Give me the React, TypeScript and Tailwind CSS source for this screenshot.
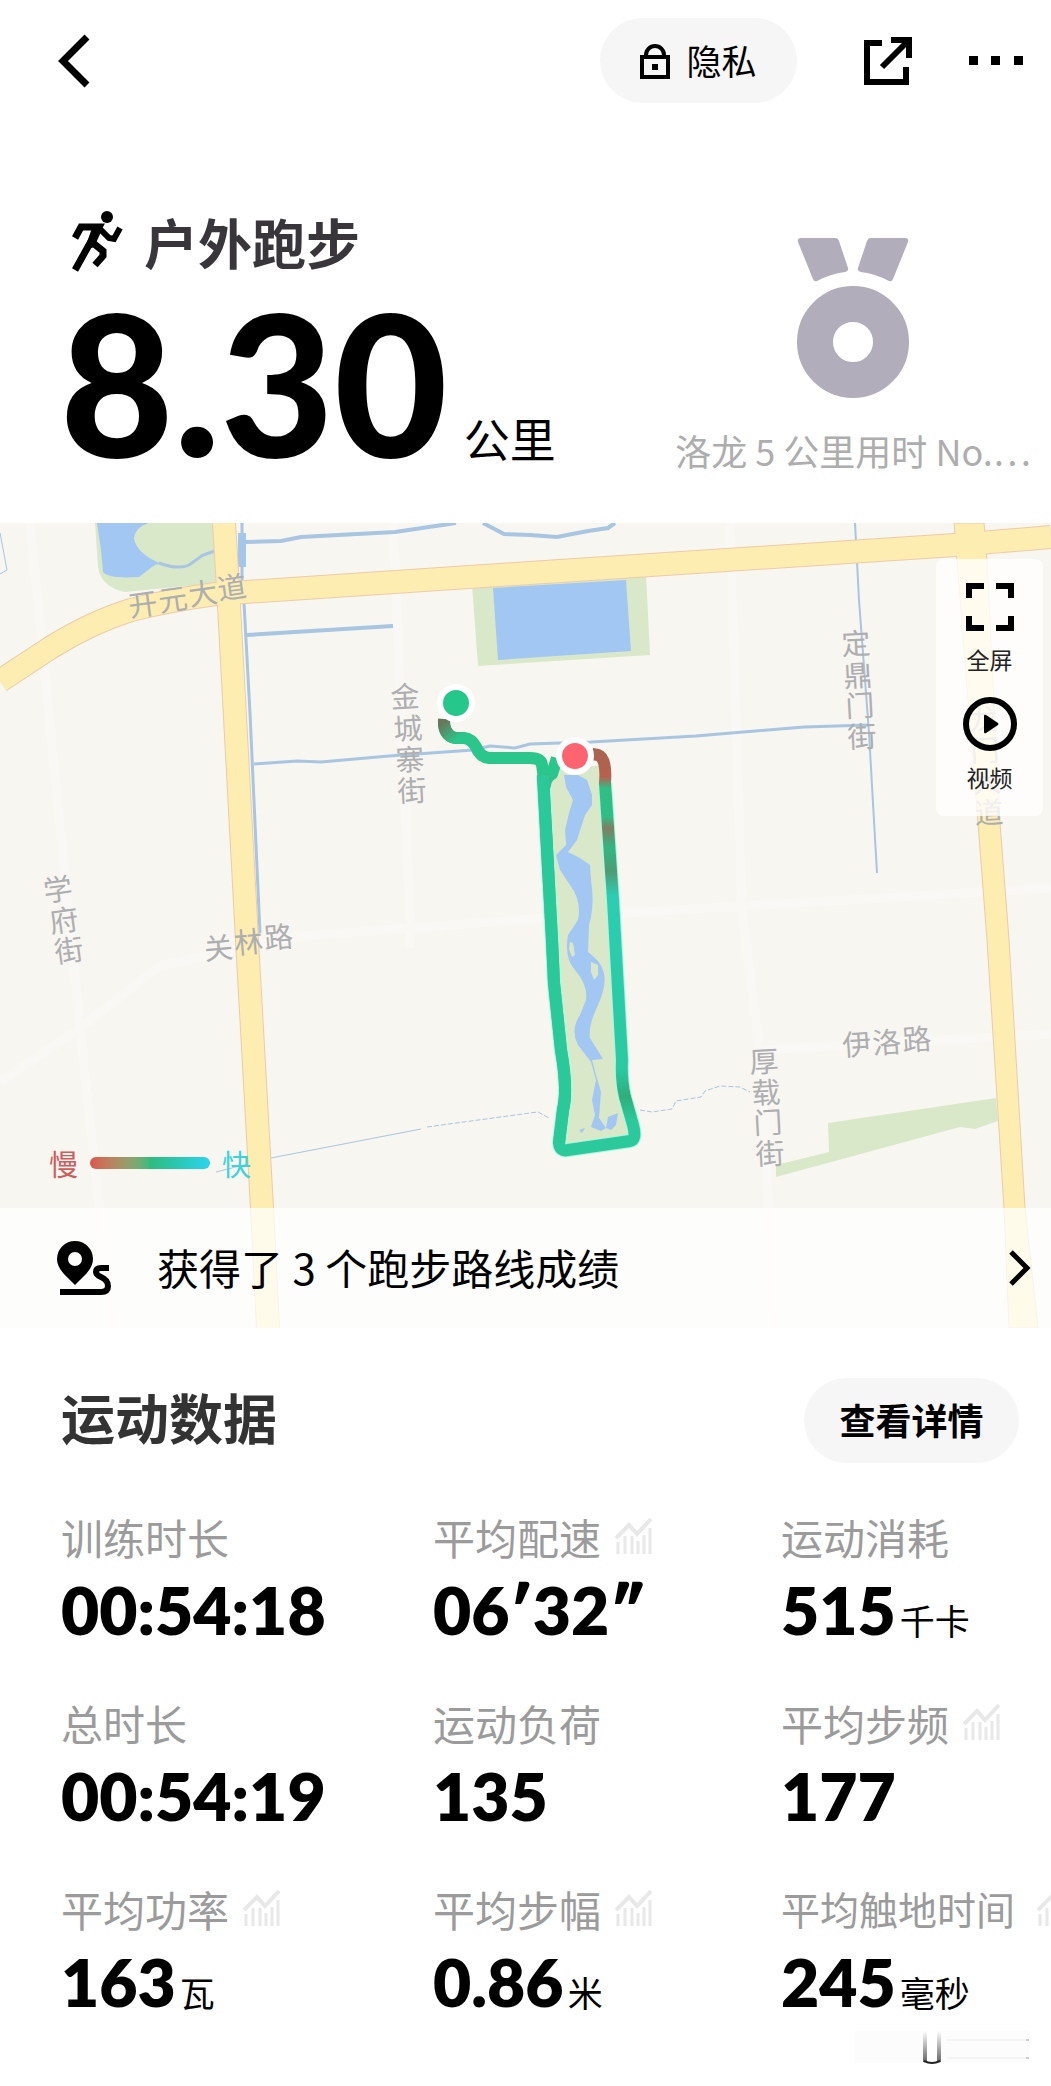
interface Metric {
  label: string;
  value: string;
  unit?: string;
  chart?: boolean;
  compact?: boolean;
}

const metrics: Metric[] = [
  { label: '训练时长', value: '00:54:18' },
  { label: '平均配速', value: '06′32″', chart: true },
  { label: '运动消耗', value: '515', unit: '千卡' },
  { label: '总时长', value: '00:54:19' },
  { label: '运动负荷', value: '135' },
  { label: '平均步频', value: '177', chart: true },
  { label: '平均功率', value: '163', unit: '瓦', chart: true },
  { label: '平均步幅', value: '0.86', unit: '米', chart: true },
  { label: '平均触地时间', value: '245', unit: '毫秒', chart: true, compact: true },
];

// x / y hold one position per character
const streets = [
  { name: '开元大道', x: '130 160 190 219', y: '617 612 606 600', rotate: -8 },
  { name: '金城寨街', x: '391 394 396 398', y: '708 740 771 802', rotate: -3 },
  { name: '学府街', x: '45 51 56', y: '902 933 963', rotate: -8 },
  { name: '关林路', x: '205 235 265', y: '960 954 949', rotate: -5 },
  { name: '定鼎门街', x: '842 844 846 848', y: '655 687 717 748', rotate: -3 },
  { name: '龙门大道', x: '969 971 973 975', y: '731 762 793 824', rotate: -3 },
  { name: '厚载门街', x: '750 752 754 756', y: '1073 1104 1134 1165', rotate: -3 },
  { name: '伊洛路', x: '843 873 903', y: '1056 1054 1051', rotate: -4 },
];

function ChartIcon() {
  return (
    <svg viewBox="0 0 38 38" className="size-[38px] shrink-0" fill="none" stroke="#e8e8e8" aria-hidden="true">
      <path d="M1 21 14 8l8 9L36 2" strokeWidth="4" />
      <path d="M3 37V25M10 37V19M17 37V19M23 37V24M29 37V18M35 37V11" strokeWidth="3" />
    </svg>
  );
}

function Header() {
  return (
    <header className="flex h-[121px] items-start pl-[55px] pr-[27px] pt-[18px]">
      <button type="button" aria-label="返回" className="flex h-[85px] items-center">
        <svg viewBox="0 0 36 54" className="h-[54px] w-9" fill="none" stroke="#000" strokeWidth="7">
          <path d="M32 3 8 27l24 24" />
        </svg>
      </button>
      <div className="ml-auto flex items-center">
        <button
          type="button"
          className="mr-[67px] flex h-[85px] w-[197px] items-center justify-center gap-4 rounded-full bg-[#f6f6f6] text-[35px]"
        >
          <svg viewBox="0 0 30 36" className="h-9 w-[30px]" fill="none" stroke="#000" strokeWidth="4">
            <path d="M2 14h26v20H2zM6 14v-2a9 9 0 0 1 18 0v2" />
            <path d="M12 21h6v6h-6z" fill="#000" stroke="none" />
          </svg>
          隐私
        </button>
        <button type="button" aria-label="分享" className="mr-14">
          <svg viewBox="0 0 48 48" className="size-12" fill="none" stroke="#000" strokeWidth="6">
            <path d="M18 6H3v39h39V30M27 3h18v18M18 30 44 4" />
          </svg>
        </button>
        <button type="button" aria-label="更多">
          <svg viewBox="0 0 56 10" className="h-[10px] w-14">
            <path d="M1 0h9v9H1zM23 0h9v9h-9zM46 0h9v9h-9z" />
          </svg>
        </button>
      </div>
    </header>
  );
}

function Summary() {
  return (
    <section className="flex h-[402px] justify-between pl-[60px] pr-[20px]">
      <div className="pt-[83px]">
        <h1 className="flex h-[76px] items-center gap-5 text-[54px] font-bold leading-none text-[#38363b]">
          <svg viewBox="0 0 52 62" className="ml-3 h-[62px] w-[52px]" fill="none" stroke="#000">
            <circle cx="35" cy="6" r="6" fill="#000" stroke="none" />
            <path d="M3 27 9 16h18L3 59" strokeWidth="7" />
            <path d="m26 16 11 11 5 1 6-11" strokeWidth="6" />
            <path d="m21 32 10 8v5L23 54" strokeWidth="7" />
            <path d="m20 17 10 2-8 17-10 4z" fill="#000" stroke="none" />
          </svg>
          户外跑步
        </h1>
        <p className="flex items-baseline gap-4 leading-[204px]">
          <span className="font-[Lato] text-[196px] font-black">8.30</span>
          <span className="text-[46px]">公里</span>
        </p>
      </div>
      <div className="flex flex-col items-center pt-[117px] text-[#adadad]">
        <svg viewBox="0 0 112 160" className="h-40 w-28" fill="#b2adba" aria-hidden="true">
          <path d="M4 0h35q2 0 3 3l9 27q1 3-3 4-15 2-28 9-3 1-4-2L1 4q-1-4 3-4zM108 0H73q-2 0-3 3l-9 27q-1 3 3 4 15 2 28 9 3 1 4-2l15-37q1-4-3-4z" />
          <circle cx="56" cy="104" r="38" fill="none" stroke="#b2adba" strokeWidth="36" />
        </svg>
        <p className="mt-[26px] text-[36px] leading-[52px]">洛龙 5 公里用时 No.…</p>
      </div>
    </section>
  );
}

function RunMap() {
  return (
    <svg
      viewBox="0 523 1051 805"
      preserveAspectRatio="xMidYMid slice"
      className="block w-full bg-[#f8f6f1]"
      fill="none"
      role="img"
      aria-label="跑步轨迹"
    >
      <defs>
        <linearGradient id="pace" gradientUnits="userSpaceOnUse" x1="0" y1="753" x2="0" y2="1148">
          <stop offset="0" stopColor="#a9644f" />
          <stop offset="0.06" stopColor="#b8604f" />
          <stop offset="0.09" stopColor="#2fbf86" />
          <stop offset="0.16" stopColor="#2fbf86" />
          <stop offset="0.19" stopColor="#7f7e62" />
          <stop offset="0.24" stopColor="#33b682" />
          <stop offset="0.3" stopColor="#4f9c74" />
          <stop offset="0.36" stopColor="#2ccdb2" />
          <stop offset="0.8" stopColor="#2bc9a0" />
          <stop offset="0.87" stopColor="#2fae7c" />
          <stop offset="0.93" stopColor="#2bc99c" />
        </linearGradient>
        <linearGradient id="start" gradientUnits="userSpaceOnUse" x1="444" y1="722" x2="458" y2="738">
          <stop offset="0" stopColor="#67785c" />
          <stop offset="1" stopColor="#2bc68b" />
        </linearGradient>
      </defs>

      {/* side streets */}
      <g stroke="#faf8f4" strokeWidth="9">
        <path d="M0 1082 80 1028 160 966 300 936 560 917 760 905 1051 888" />
        <path d="M30 523 80 1028 112 1328M393 523l17 395v30M730 523l12 390 20 155 12 260M760 1050l291-16" />
      </g>

      {/* parks */}
      <g fill="#dae8ca">
        <path d="M95 523 98 567Q101 587 125 592L217 583 213 523z" />
        <path d="M472 585 478 666 650 655 646 574z" />
        <path d="M776 1177V1165L829 1152 828 1123 996 1098 998 1121 975 1129 960 1127z" />
        <path d="M545 770 606 765 616 983 622 1060 635 1138 562 1150 566 1087 552 940z" />
      </g>

      {/* water */}
      <g fill="#a2c7f3">
        <path d="M97 523 101 550 103 572Q108 579 139 577L152 567Q158 562 163 565L159 563Q137 553 134 539 135 527 149 523z" />
        <path d="M238 533h8v34h-8zM493 588 498 660 631 651 626 580z" />
        <path d="M564 775 566 787 573 800 569 813 565 830 566 845 556 855 560 870 570 885Q582 901 578 920L568 935Q564 958 575 970 588 985 586 1000L580 1015Q570 1030 578 1045L591 1062 596 1080 592 1100 595 1115 591 1127 601 1131 606 1128 599 1118 601 1092 596 1075 592 1060 603 1059 590 1038Q588 1026 598 1005 608 983 603 970 601 962 588 952L589 925Q595 905 591 880L590 865 580 858 568 852 577 840 585 815 592 805 592 795 587 780 578 775z" />
        <path d="M606 1128 608 1117 618 1113 616 1125 611 1130zM579 1130l6-2-3 5z" />
      </g>
      <path d="m591 962 7 3 0 10-4 5-3-8zM570 942l3 1 2 12-3 2-3-8z" fill="#dae8ca" />
      <g stroke="#a8c5e2">
        <path d="M159 563Q178 570 189 565L203 555 215 551" strokeWidth="3" />
        <path d="M246 542 281 541 301 537 395 532 456 523M483 523 504 534 530 535 557 537 588 531 608 528 615 523" strokeWidth="4" />
        <path d="M247 635 393 626" strokeWidth="4" />
        <path d="M242 523V590M244 603 250 713 260 933" strokeWidth="3" />
        <path d="M254 764 297 761 321 762 389 756 473 750 490 746 515 748 530 744 591 742 696 736 804 727 869 725" strokeWidth="3" />
        <path d="M855 523 859 600 869 733 877 873" strokeWidth="2" />
        <path d="M0 533 7 570 0 574M216 1172 271 1158 421 1129" />
        <path d="M427 1127 530 1113 538 1112 549 1118M640 1110 652 1112 672 1109 676 1101 701 1097 705 1091 720 1086 740 1087 750 1092" strokeDasharray="5 2" />
      </g>

      {/* main roads */}
      <g stroke="#edcba7" strokeWidth="24">
        <path d="M0 681 50 648Q92 622 131 610 170 600 216 594L530 573 955 545 1051 537" />
        <path d="M224 523 228 587 247 940 262 1208 268 1328" />
        <path d="M954 523h30l3 37 13 263 9 117 16 268 13 120h-29l-5-120-17-268-9-117-10-123z" strokeWidth="1" fill="#fdedb1" />
      </g>
      <g stroke="#fdedb1" strokeWidth="22">
        <path d="M0 681 50 648Q92 622 131 610 170 600 216 594L530 573 955 545 1051 537" />
        <path d="M224 523 228 587 247 940 262 1208 268 1328" />
      </g>

      <g fill="#adaeb0" fontSize="29">
        {streets.map((street) => (
          <text key={street.name} x={street.x} y={street.y} rotate={street.rotate}>
            {street.name}
          </text>
        ))}
      </g>

      {/* track */}
      <g strokeLinejoin="round" strokeWidth="12">
        <path d="M543 775 552 940 554 983 561 1050Q568 1090 563 1110L559 1143Q560 1152 568 1150L630 1141Q637 1140 633 1125L625 1097Q621 1080 622 1060L613 900 605 783" stroke="#a8f7e3" strokeWidth="14" />
        <path d="M444 719Q443 735 455 738L464 738Q472 739 476 747 480 757 489 758L530 758Q541 758 542 765L545 785Q546 777 552 774L557 758" stroke="#2bc68b" />
        <path d="M444 719Q443 735 455 738L464 738" stroke="url(#start)" />
        <path d="M543 775 552 940 554 983 561 1050Q568 1090 563 1110L559 1143Q560 1152 568 1150L630 1141Q637 1140 633 1125L625 1097Q621 1080 622 1060L613 900 605 783Q607 758 598 755L592 754" stroke="url(#pace)" />
        <path d="M543 775 552 940 554 983 561 1050Q568 1090 563 1110L559 1143" stroke="#2bc89a" />
      </g>
      <circle cx="456" cy="703" r="16" fill="#25c78b" stroke="#fff" strokeWidth="6" />
      <circle cx="575" cy="756" r="16" fill="#fc6470" stroke="#fff" strokeWidth="6" />
    </svg>
  );
}

function MapSection() {
  return (
    <section className="relative">
      <RunMap />
      <div className="absolute right-2 top-9 flex h-[257px] w-[107px] flex-col items-center rounded-lg bg-white/80 pt-6 text-[23px] leading-7 text-[#222]">
        <button type="button" className="flex flex-col items-center gap-[14px]">
          <svg viewBox="0 0 48 48" className="size-12" fill="none" stroke="#000" strokeWidth="6">
            <path d="M3 15V3h15M30 3h15v12M45 33v12H30M18 45H3V33" />
          </svg>
          全屏
        </button>
        <button type="button" className="mt-6 flex flex-col items-center gap-3">
          <svg viewBox="0 0 54 54" className="size-[54px]">
            <circle cx="27" cy="27" r="24" fill="none" stroke="#000" strokeWidth="6" />
            <path d="M21 19v16q0 2 2 1l12-8q1-1 0-2l-12-8q-2-1-2 1z" />
          </svg>
          视频
        </button>
      </div>
      <div className="absolute bottom-[145px] left-[49px] flex items-center gap-3 text-[29px] leading-10">
        <span className="text-[#cd5c5c]">慢</span>
        <span className="h-3 w-[120px] rounded-full bg-linear-to-r from-[#dc564f] via-[#2fbb7c] to-[#2bd5ec]" />
        <span className="text-[#3bd3dd]">快</span>
      </div>
      <a href="#routes" className="absolute inset-x-0 bottom-0 flex h-[120px] items-center bg-white/75 pl-[57px] pr-5 text-[42px]">
        <svg viewBox="0 0 54 54" className="mr-[46px] size-[54px]">
          <path d="M18 0a18 18 0 0 0-18 18c0 10 9 17 18 26 9-9 18-16 18-26A18 18 0 0 0 18 0zm0 11a7 7 0 1 1 0 14 7 7 0 0 1 0-14z" fillRule="evenodd" />
          <path d="M52 27H44q-5 0-5 4 0 3 5 5 7 3 7 9 0 6-7 6H3" fill="none" stroke="#000" strokeWidth="6" />
        </svg>
        <span className="pb-1">获得了 3 个跑步路线成绩</span>
        <svg viewBox="0 0 22 36" className="ml-auto h-9 w-[22px]" fill="none" stroke="#000" strokeWidth="5">
          <path d="m2 2 16 16L2 34" />
        </svg>
      </a>
    </section>
  );
}

function MetricItem({ label, value, unit, chart, compact }: Metric) {
  return (
    <div className="h-[186px] whitespace-nowrap">
      <dt className="flex h-[54px] items-center gap-[14px] text-[#9b9b9b]">
        <span className={compact ? 'mr-2 text-[39px]' : 'text-[42px]'}>{label}</span>
        {chart && <ChartIcon />}
      </dt>
      <dd className="flex items-baseline gap-1 leading-[94px]">
        <span className="font-[Lato] text-[66px] font-extrabold">{value}</span>
        {unit && <span className="text-[35px]">{unit}</span>}
      </dd>
    </div>
  );
}

function CornerMark() {
  return (
    <svg viewBox="0 0 174 34" className="absolute bottom-[21px] right-[22px] h-[34px] w-[174px]" aria-hidden="true">
      <defs>
        <linearGradient id="mark" x1="0" y1="0" x2="0" y2="1">
          <stop offset="0" stopColor="#fff" />
          <stop offset="1" stopColor="#666" />
        </linearGradient>
      </defs>
      <path d="M0 0h174v32H0z" fill="#fcfcfc" />
      <path d="M92 9h82M92 27h82" stroke="#ececec" />
      <path d="M171 9h3M171 27h3" stroke="#aaa" />
      <path d="M69 0h17v31H69z" fill="#fff" />
      <path d="M68 0h4v31h-4zM82 0h4v31h-4z" fill="url(#mark)" />
      <path d="M69 30q8 4 16 0" fill="none" stroke="#222" strokeWidth="2" />
    </svg>
  );
}

export default function App() {
  return (
    <main className="overflow-hidden bg-white font-['Noto_Sans_CJK_SC',sans-serif] text-black">
      <Header />
      <Summary />
      <MapSection />
      <section className="relative pb-[19px] pl-[61px] pt-[50px]">
        <div className="flex items-center justify-between pr-8">
          <h2 className="pb-2 text-[54px] font-bold leading-none text-[#333]">运动数据</h2>
          <button type="button" className="h-[85px] w-[215px] rounded-full bg-[#f6f6f6] pb-1 text-[36px] font-bold">
            查看详情
          </button>
        </div>
        <dl className="mt-[46px] grid grid-cols-[minmax(0,372fr)_minmax(0,348fr)_minmax(0,270fr)]">
          {metrics.map((metric) => (
            <MetricItem key={metric.label} {...metric} />
          ))}
        </dl>
        <CornerMark />
      </section>
    </main>
  );
}
